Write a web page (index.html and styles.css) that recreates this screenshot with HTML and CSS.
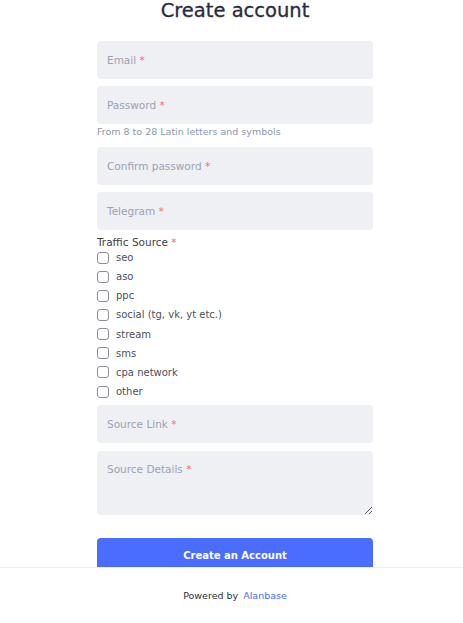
FILE: index.html
```html
<!DOCTYPE html>
<html>
<head>
<meta charset="utf-8">
<link rel="stylesheet" href="styles.css">
</head>
<body>
<main class="page">
  <form class="form">
    <h1 class="title">Create account</h1>
    <div class="field"><input class="input" type="text"><span class="ph">Email <i>*</i></span></div>
    <div class="field"><input class="input" type="password"><span class="ph">Password <i>*</i></span></div>
    <p class="hint">From 8 to 28 Latin letters and symbols</p>
    <div class="field"><input class="input" type="password"><span class="ph">Confirm password <i>*</i></span></div>
    <div class="field"><input class="input" type="text"><span class="ph">Telegram <i>*</i></span></div>
    <div class="group">
      <div class="group-label">Traffic Source <i>*</i></div>
      <label class="check"><span class="box"></span>seo</label>
      <label class="check"><span class="box"></span>aso</label>
      <label class="check"><span class="box"></span>ppc</label>
      <label class="check"><span class="box"></span>social (tg, vk, yt etc.)</label>
      <label class="check"><span class="box"></span>stream</label>
      <label class="check"><span class="box"></span>sms</label>
      <label class="check"><span class="box"></span>cpa network</label>
      <label class="check"><span class="box"></span>other</label>
    </div>
    <div class="field"><input class="input" type="text"><span class="ph">Source Link <i>*</i></span></div>
    <div class="field field-area"><textarea class="area"></textarea><span class="ph ph-area">Source Details <i>*</i></span></div>
    <button class="submit" type="button">Create an Account</button>
  </form>
</main>
<footer class="footer">
  <span class="powered">Powered by <a class="brand">Alanbase</a></span>
</footer>
</body>
</html>
```
FILE: styles.css
```css
* { box-sizing: border-box; }
html, body { margin: 0; padding: 0; background: #fff; }
body {
  font-family: "DejaVu Sans", "Noto Sans", sans-serif;
  color: #303133;
  height: 623px;
  overflow: hidden;
}
.page {
  padding-left: 7px;
}
.form {
  width: 276px;
  margin: 0 auto;
  display: flex;
  flex-direction: column;
}
.title {
  margin: 0;
  font-size: 19.5px;
  line-height: 21px;
  font-weight: 500;
  text-align: center;
  color: #2a2b3a;
  -webkit-text-stroke: 0.3px #2a2b3a;
  height: 41px;
}
.field {
  position: relative;
  height: 38px;
  margin-bottom: 7px;
}
.input, .area {
  display: block;
  width: 100%;
  height: 100%;
  border: none;
  border-radius: 4px;
  background: #eff0f4;
  outline: none;
  font: inherit;
}
.area { resize: vertical; }
.field-area { height: 64px; margin-top: 1px; margin-bottom: 23px; }
.ph {
  position: absolute;
  left: 10px;
  top: 0;
  line-height: 38px;
  font-size: 10.5px;
  color: #9ba1b4;
  pointer-events: none;
}
.ph-area { top: 11px; line-height: 14px; }
.ph i, .group-label i {
  font-style: normal;
  color: #f56c6c;
}
.hint {
  margin: -6px 0 0;
  font-size: 9.5px;
  line-height: 14px;
  color: #8e96ad;
  height: 22px;
}
.group {
  display: flex;
  flex-direction: column;
  margin-top: -1px;
  margin-bottom: 4px;
}
.group-label {
  font-size: 10.5px;
  line-height: 13px;
  color: #3d3f50;
  margin-bottom: -1px;
}
.check {
  display: flex;
  align-items: center;
  height: 19.15px;
  font-size: 10px;
  color: #4d4f5e;
}
.box {
  width: 12px;
  height: 12px;
  border: 1px solid #8c8f99;
  border-radius: 3px;
  margin-right: 7px;
  background: #fff;
}
.submit {
  height: 36px;
  border: none;
  border-radius: 4px;
  background: #4a6cff;
  color: #fff;
  font: inherit;
  font-size: 10px;
  font-weight: bold;
  padding: 0 0 2px;
}
.footer {
  position: fixed;
  left: 0;
  right: 0;
  bottom: 0;
  height: 56px;
  background: #fff;
  border-top: 1px solid #ebedf2;
  display: flex;
  align-items: center;
  justify-content: center;
  padding-left: 7px;
}
.powered {
  font-size: 9.5px;
  color: #2f3040;
}
.brand {
  color: #4a6cff;
  margin-left: 2px;
}
```
